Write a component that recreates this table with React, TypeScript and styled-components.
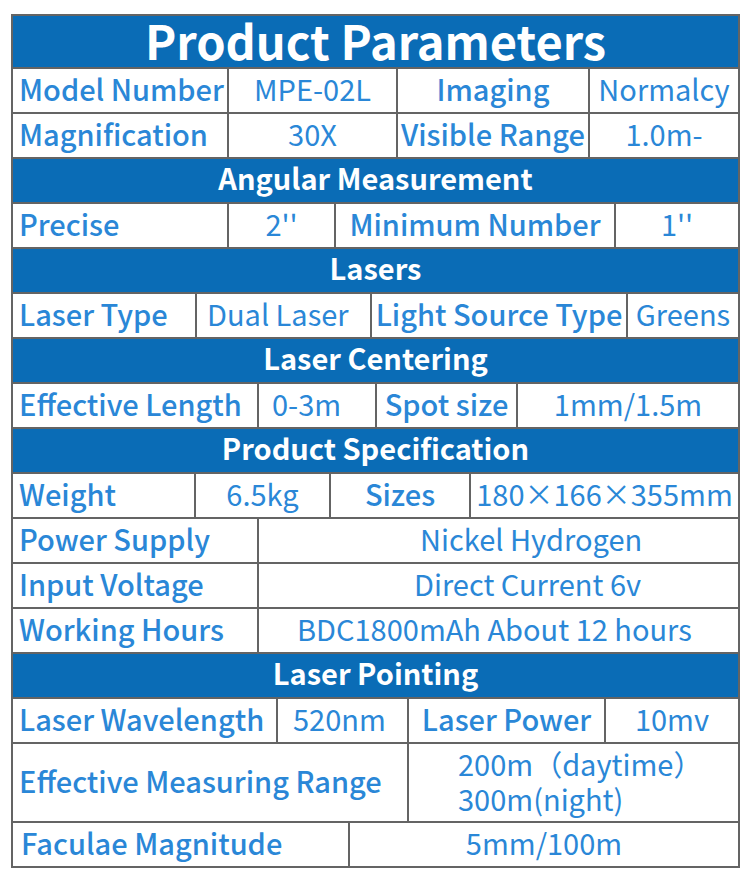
import styled, { createGlobalStyle } from 'styled-components';

type Align = 'left' | 'center';

interface CellDef {
  text: string;
  label?: boolean;
  align?: Align;
  pad?: number;
}

interface RowDef {
  cols: string;
  height?: number;
  cells: CellDef[];
}

interface Section {
  title: string;
  rows: RowDef[];
}

const L = (text: string, align: Align = 'left', pad = 6): CellDef => ({ text, label: true, align, pad });
const V = (text: string, align: Align = 'center', pad = 0): CellDef => ({ text, align, pad });

const sections: Section[] = [
  {
    title: 'Product Parameters',
    rows: [
      {
        cols: '214px 167px 190px 1fr',
        cells: [L('Model Number'), V('MPE-02L'), L('Imaging', 'center', 0), V('Normalcy')],
      },
      {
        cols: '214px 167px 190px 1fr',
        cells: [L('Magnification'), V('30X'), L('Visible Range', 'center', 0), V('1.0m-')],
      },
    ],
  },
  {
    title: 'Angular Measurement',
    rows: [
      {
        cols: '214px 105px 278px 1fr',
        cells: [L('Precise'), V("2''"), L('Minimum Number', 'center', 0), V("1''")],
      },
    ],
  },
  {
    title: 'Lasers',
    rows: [
      {
        cols: '182px 173px 254px 1fr',
        cells: [L('Laser Type'), V('Dual Laser', 'left', 10), L('Light Source Type', 'center', 0), V('Greens')],
      },
    ],
  },
  {
    title: 'Laser Centering',
    rows: [
      {
        cols: '244px 116px 139px 1fr',
        cells: [L('Effective Length'), V('0-3m', 'left', 13), L('Spot size', 'center', 0), V('1mm/1.5m')],
      },
    ],
  },
  {
    title: 'Product Specification',
    rows: [
      {
        cols: '181px 133px 138px 1fr',
        cells: [L('Weight'), V('6.5kg'), L('Sizes', 'center', 0), V('180×166×355mm')],
      },
      { cols: '244px 1fr', cells: [L('Power Supply'), V('Nickel Hydrogen', 'left', 161)] },
      { cols: '244px 1fr', cells: [L('Input Voltage'), V('Direct Current 6v', 'left', 155)] },
      { cols: '244px 1fr', cells: [L('Working Hours'), V('BDC1800mAh About 12 hours', 'left', 38)] },
    ],
  },
  {
    title: 'Laser Pointing',
    rows: [
      {
        cols: '263px 129px 195px 1fr',
        cells: [L('Laser Wavelength'), V('520nm', 'left', 15), L('Laser Power', 'center', 0), V('10mv')],
      },
      {
        cols: '394px 1fr',
        height: 77,
        cells: [L('Effective Measuring Range'), V('200m（daytime）\n300m(night)', 'left', 49)],
      },
      { cols: '335px 1fr', cells: [L('Faculae Magnitude', 'left', 8), V('5mm/100m')] },
    ],
  },
];

export default function App() {
  return (
    <>
      <GlobalStyle />
      <Sheet>
        {sections.map((section, i) => (
          <Group key={section.title}>
            {i === 0 ? <Title>{section.title}</Title> : <Heading>{section.title}</Heading>}
            {section.rows.map((row, j) => (
              <Row key={j} $cols={row.cols} $height={row.height ?? 43}>
                {row.cells.map((cell, k) => (
                  <Cell key={k} $label={cell.label} $align={cell.align ?? 'center'} $pad={cell.pad ?? 0}>
                    {cell.text}
                  </Cell>
                ))}
              </Row>
            ))}
          </Group>
        ))}
      </Sheet>
    </>
  );
}

const GlobalStyle = createGlobalStyle`
  html, body {
    margin: 0;
    padding: 0;
    background: #ffffff;
  }

  body {
    font-family: "Noto Sans CJK SC", "Noto Sans", sans-serif;
  }
`;

const Sheet = styled.div`
  box-sizing: border-box;
  width: 729px;
  margin: 14px 0 0 11px;
  padding: 2px;
  display: flex;
  flex-direction: column;
  gap: 2px;
  background: #646464;
`;

const Group = styled.div`
  display: flex;
  flex-direction: column;
  gap: 2px;
`;

const Title = styled.div`
  box-sizing: border-box;
  height: 51px;
  padding-bottom: 4px;
  display: flex;
  align-items: center;
  justify-content: center;
  background: #0a6cb6;
  color: #ffffff;
  font-size: 47px;
  font-weight: 700;
  line-height: 1;
`;

const Heading = styled.div`
  box-sizing: border-box;
  height: 43px;
  padding-bottom: 6px;
  display: flex;
  align-items: center;
  justify-content: center;
  background: #0a6cb6;
  color: #ffffff;
  font-size: 29px;
  font-weight: 700;
  line-height: 1;
`;

const Row = styled.div<{ $cols: string; $height: number }>`
  display: grid;
  grid-template-columns: ${(p) => p.$cols};
  column-gap: 2px;
  height: ${(p) => p.$height}px;
`;

const Cell = styled.div<{ $label?: boolean; $align: Align; $pad: number }>`
  box-sizing: border-box;
  display: flex;
  align-items: center;
  justify-content: ${(p) => (p.$align === 'left' ? 'flex-start' : 'center')};
  padding-left: ${(p) => p.$pad}px;
  padding-bottom: 4px;
  background: #ffffff;
  color: #2a87d7;
  font-size: 29px;
  font-weight: ${(p) => (p.$label ? 500 : 400)};
  line-height: 35px;
  white-space: pre;
  overflow: visible;
`;
